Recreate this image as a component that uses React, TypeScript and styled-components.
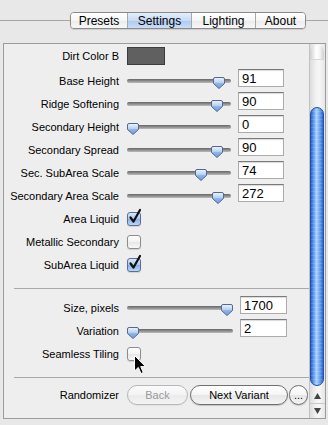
import React from "react";
import styled, { createGlobalStyle } from "styled-components";

const GlobalStyle = createGlobalStyle`
  html, body {
    margin: 0;
    padding: 0;
    background: #e8e8e8;
  }
  body {
    font-family: "Liberation Sans", Arial, sans-serif;
    color: #000;
  }
`;

const Window = styled.div`
  position: relative;
  width: 328px;
  height: 425px;
  overflow: hidden;
`;

const TabBar = styled.div`
  display: flex;
  align-items: center;
  padding-top: 12px;
  height: 17px;
`;

const TabLine = styled.div<{ $width?: number }>`
  height: 1px;
  background: #a6a6a6;
  flex: ${(p) => (p.$width ? `0 0 ${p.$width}px` : "1")};
`;

const TabGroup = styled.div`
  display: flex;
  height: 17px;
  box-sizing: border-box;
  border: 1px solid #8a8a8a;
  border-radius: 4px;
  overflow: hidden;
  box-shadow: 0 1px 1px rgba(0, 0, 0, 0.12);
`;

const Tab = styled.div<{ $width: number; $active?: boolean }>`
  width: ${(p) => p.$width}px;
  box-sizing: border-box;
  display: flex;
  align-items: center;
  justify-content: center;
  font-size: 12px;
  line-height: 1;
  & + & {
    border-left: 1px solid #a8a8a8;
  }
  background: ${(p) =>
    p.$active
      ? "linear-gradient(#e4eefb 0%, #c6dbf6 50%, #acc9f0 51%, #c9def8 100%)"
      : "linear-gradient(#ffffff 0%, #f6f6f6 50%, #ebebeb 51%, #f7f7f7 100%)"};
`;

const Panel = styled.div`
  margin: 14px 0 0 3px;
  width: 323px;
  height: 376px;
  box-sizing: border-box;
  border: 1px solid #9c9c9c;
  background: #eeeeee;
  display: flex;
`;

const Content = styled.div`
  width: 305px;
  display: flex;
  flex-direction: column;
`;

const Row = styled.div<{ $height?: number; $gapAfter?: number }>`
  display: grid;
  grid-template-columns: 115px 1fr;
  column-gap: 8px;
  align-items: center;
  height: ${(p) => p.$height ?? 23}px;
  margin-bottom: ${(p) => p.$gapAfter ?? 0}px;
`;

const Label = styled.div`
  font-size: 11px;
  text-align: right;
  white-space: nowrap;
`;

const Controls = styled.div`
  display: flex;
  align-items: center;
`;

const Separator = styled.div<{ $above: number; $below: number }>`
  height: 1px;
  background: #a9a9a9;
  margin: ${(p) => p.$above}px 0 ${(p) => p.$below}px 10px;
`;

const Swatch = styled.div`
  width: 38px;
  height: 18px;
  box-sizing: border-box;
  border: 1px solid #3c3c3c;
  background: #606060;
`;

const SliderBox = styled.div<{ $width: number }>`
  position: relative;
  width: ${(p) => p.$width}px;
  height: 14px;
  display: flex;
  align-items: center;
`;

const Track = styled.div`
  width: 100%;
  height: 4px;
  border-radius: 2px;
  background: linear-gradient(#666 0%, #8e8e8e 50%, #bcbcbc 100%);
`;

const Thumb = styled.svg`
  position: absolute;
  top: 3px;
  width: 12px;
  height: 12px;
  overflow: visible;
`;

const ValueInput = styled.input<{ $width: number }>`
  width: ${(p) => p.$width}px;
  height: 18px;
  box-sizing: border-box;
  margin: 0 0 5px 7px;
  padding: 0 3px;
  border: 1px solid #acacac;
  border-top-color: #7a7a7a;
  box-shadow: inset 0 1px 1px rgba(0, 0, 0, 0.15);
  background: #fff;
  font-family: "Liberation Sans", Arial, sans-serif;
  font-size: 13px;
  color: #000;
  outline: none;
`;

const CheckBox = styled.div<{ $checked?: boolean }>`
  position: relative;
  width: 14px;
  height: 14px;
  box-sizing: border-box;
  border-radius: 3px;
  border: 1px solid ${(p) => (p.$checked ? "#5a6f91" : "#8d8d8d")};
  background: ${(p) =>
    p.$checked
      ? "linear-gradient(#d9e7f9 0%, #a9c7ee 50%, #86b0e8 51%, #bcd6f6 100%)"
      : "linear-gradient(#fdfdfd 0%, #f2f2f2 50%, #e6e6e6 51%, #f8f8f8 100%)"};
  box-shadow: 0 1px 1px rgba(0, 0, 0, 0.12);
`;

const CheckMark = styled.svg`
  position: absolute;
  left: 0;
  top: -4px;
  width: 14px;
  height: 16px;
  overflow: visible;
`;

const ButtonRow = styled.div`
  display: flex;
  align-items: center;
  gap: 2px;
`;

const PillButton = styled.button<{ $width: number; $disabled?: boolean }>`
  width: ${(p) => p.$width}px;
  height: 20px;
  box-sizing: border-box;
  padding: 0;
  border-radius: 10px;
  border: 1px solid ${(p) => (p.$disabled ? "#b7b7b7" : "#6f6f6f")};
  background: ${(p) =>
    p.$disabled
      ? "linear-gradient(#fbfbfb 0%, #f3f3f3 50%, #ebebeb 51%, #f3f3f3 100%)"
      : "linear-gradient(#ffffff 0%, #f5f5f5 50%, #e6e6e6 51%, #f4f4f4 100%)"};
  color: ${(p) => (p.$disabled ? "#9a9a9a" : "#000")};
  font-family: "Liberation Sans", Arial, sans-serif;
  font-size: 11px;
  line-height: 1;
  box-shadow: 0 1px 1px rgba(0, 0, 0, ${(p) => (p.$disabled ? 0.05 : 0.18)});
`;

const Scrollbar = styled.div`
  width: 16px;
  box-sizing: border-box;
  border-left: 1px solid #c2c2c2;
  display: flex;
  flex-direction: column;
  background: linear-gradient(to right, #dcdcdc, #f2f2f2 40%, #f7f7f7 60%, #e6e6e6);
`;

const ScrollCap = styled.div`
  height: 14px;
  margin: 1px 1px 0 0;
  border-radius: 7px 7px 0 0;
  background: linear-gradient(to right, #cfcfcf, #ffffff 45%, #f4f4f4 70%, #cdcdcd);
  border-bottom: 1px solid #d8d8d8;
`;

const ScrollTrack = styled.div`
  flex: 1;
  display: flex;
  flex-direction: column;
`;

const ScrollThumb = styled.div<{ $top: number; $height: number }>`
  margin: ${(p) => p.$top}px 1px 0 0;
  height: ${(p) => p.$height}px;
  border-radius: 7px;
  border: 1px solid #1f4fa8;
  box-sizing: border-box;
  background:
    repeating-linear-gradient(rgba(255, 255, 255, 0) 0 3px, rgba(255, 255, 255, 0.12) 3px 4px),
    linear-gradient(to right, #2a62c9 0%, #5f9bee 22%, #aed0fa 45%, #86b8f4 62%, #4c8ae6 85%, #2a62c9 100%);
`;

const ArrowButton = styled.div<{ $last?: boolean }>`
  height: 15px;
  display: flex;
  align-items: center;
  justify-content: center;
  border-top: 1px solid ${(p) => (p.$last ? "#c8c8c8" : "transparent")};
  box-sizing: border-box;
`;

const Cursor = styled.svg`
  position: absolute;
  left: 134px;
  top: 355px;
  width: 13px;
  height: 20px;
  overflow: visible;
`;

function Slider({ width, frac }: { width: number; frac: number }) {
  return (
    <SliderBox $width={width}>
      <Track />
      <Thumb viewBox="0 0 12 12" style={{ left: Math.round(frac * (width - 12)) }}>
        <defs>
          <linearGradient id="thumbFill" x1="0" y1="0" x2="0" y2="1">
            <stop offset="0" stopColor="#eef4fd" />
            <stop offset="0.45" stopColor="#b9d2f3" />
            <stop offset="0.55" stopColor="#8db4ea" />
            <stop offset="1" stopColor="#6b9de3" />
          </linearGradient>
        </defs>
        <path
          d="M0.5 2 Q0.5 0.5 2 0.5 H10 Q11.5 0.5 11.5 2 V6.5 L6 11.5 L0.5 6.5 Z"
          fill="url(#thumbFill)"
          stroke="#55698c"
          strokeWidth="1"
        />
      </Thumb>
    </SliderBox>
  );
}

function SliderRow(props: { label: string; value: string; frac: number; wide?: boolean }) {
  const sliderWidth = props.wide ? 106 : 104;
  const inputWidth = props.wide ? 47 : 46;
  return (
    <Row>
      <Label>{props.label}</Label>
      <Controls>
        <Slider width={sliderWidth} frac={props.frac} />
        <ValueInput $width={inputWidth} value={props.value} readOnly />
      </Controls>
    </Row>
  );
}

function CheckRow(props: { label: string; checked?: boolean }) {
  return (
    <Row>
      <Label>{props.label}</Label>
      <Controls>
        <CheckBox $checked={props.checked}>
          {props.checked && (
            <CheckMark viewBox="0 0 14 16">
              <path d="M2.5 8.5 L5.5 12.5 L12 1" fill="none" stroke="#111" strokeWidth="2.2" strokeLinecap="round" strokeLinejoin="round" />
            </CheckMark>
          )}
        </CheckBox>
      </Controls>
    </Row>
  );
}

const topSliders = [
  { label: "Base Height", value: "91", frac: 0.935 },
  { label: "Ridge Softening", value: "90", frac: 0.913 },
  { label: "Secondary Height", value: "0", frac: 0 },
  { label: "Secondary Spread", value: "90", frac: 0.913 },
  { label: "Sec. SubArea Scale", value: "74", frac: 0.74 },
  { label: "Secondary Area Scale", value: "272", frac: 0.924 },
];

const tabs = [
  { name: "Presets", width: 56 },
  { name: "Settings", width: 64, active: true },
  { name: "Lighting", width: 64 },
  { name: "About", width: 50 },
];

export default function App() {
  return (
    <Window>
      <GlobalStyle />
      <TabBar>
        <TabLine $width={70} />
        <TabGroup>
          {tabs.map((t) => (
            <Tab key={t.name} $width={t.width} $active={t.active}>
              {t.name}
            </Tab>
          ))}
        </TabGroup>
        <TabLine />
      </TabBar>

      <Panel>
        <Content>
          <Row $gapAfter={2}>
            <Label>Dirt Color B</Label>
            <Controls>
              <Swatch />
            </Controls>
          </Row>
          {topSliders.map((s) => (
            <SliderRow key={s.label} label={s.label} value={s.value} frac={s.frac} />
          ))}
          <CheckRow label="Area Liquid" checked />
          <CheckRow label="Metallic Secondary" />
          <CheckRow label="SubArea Liquid" checked />

          <Separator $above={12} $below={7} />

          <SliderRow label="Size, pixels" value="1700" frac={1} wide />
          <SliderRow label="Variation" value="2" frac={0} wide />
          <CheckRow label="Seamless Tiling" />

          <Separator $above={12} $below={6} />

          <Row $height={22}>
            <Label>Randomizer</Label>
            <ButtonRow>
              <PillButton $width={61} $disabled>
                Back
              </PillButton>
              <PillButton $width={98}>Next Variant</PillButton>
              <PillButton $width={19} style={{ marginLeft: -1 }}>
                ...
              </PillButton>
            </ButtonRow>
          </Row>
        </Content>

        <Scrollbar>
          <ScrollCap />
          <ScrollTrack>
            <ScrollThumb $top={47} $height={279} />
          </ScrollTrack>
          <ArrowButton>
            <svg width="7" height="6" viewBox="0 0 7 6">
              <path d="M3.5 0 L7 6 H0 Z" fill="#444" />
            </svg>
          </ArrowButton>
          <ArrowButton $last>
            <svg width="7" height="6" viewBox="0 0 7 6">
              <path d="M0 0 H7 L3.5 6 Z" fill="#444" />
            </svg>
          </ArrowButton>
        </Scrollbar>
      </Panel>

      <Cursor viewBox="0 0 13 20">
        <path d="M0.5 0.5 V16 L4.3 12.4 L7 18.5 L9.3 17.5 L6.7 11.6 H11.5 Z" fill="#000" stroke="#fff" strokeWidth="1" strokeLinejoin="round" />
      </Cursor>
    </Window>
  );
}
